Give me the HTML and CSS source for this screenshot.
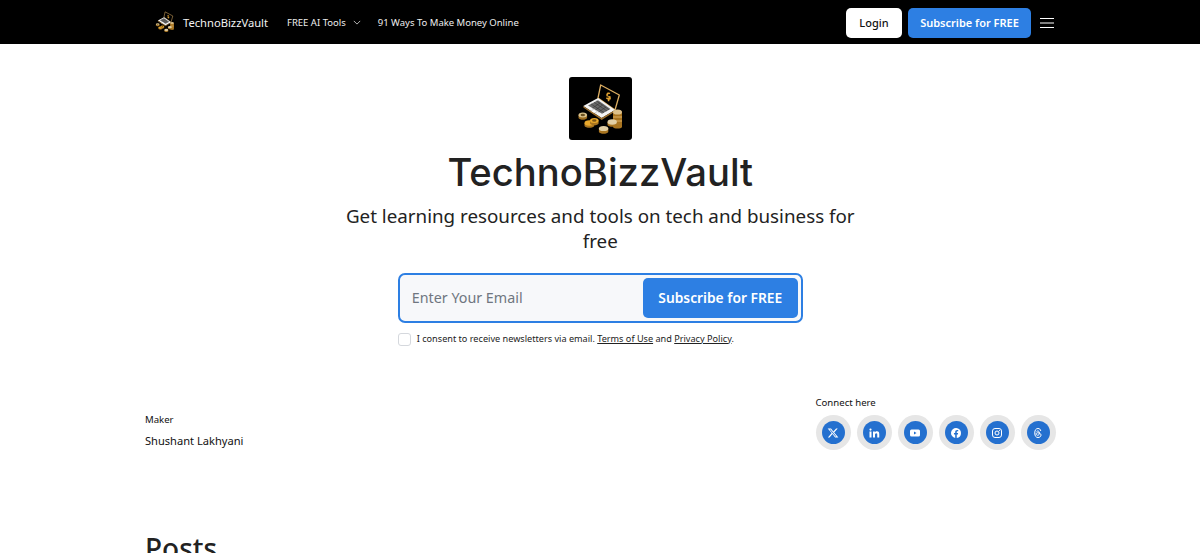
FILE: index.html
```html
<!DOCTYPE html>
<html lang="en">
<head>
<meta charset="utf-8">
<title>TechnoBizzVault</title>
<link rel="stylesheet" href="styles.css">
</head>
<body>
<svg class="defs" width="0" height="0" aria-hidden="true">
  <symbol id="laptop" viewBox="0 0 63 63">
    <path d="M31.700 8 50.300 18 46 33 29 21z" fill="#000" stroke="#dcae62" stroke-width="1.300" stroke-linejoin="round"/>
    <path d="M38.500 15.500h2l.8 1.500-2.300.3-.2 1.500 2.800.5.300 3-1.500.5v1.500h-1.600v-1.700l-1.700-.8.200-1.300 2.300.3-.1-1-2.100-.6-.1-2.200z" fill="#e0a030"/>
    <path d="M14.300 29 29 21 46 33 32.700 41z" fill="#f4f4f4"/>
    <path d="M19 28.500 29 23.300 41.500 32 33 36.800z" fill="#6a6a6a"/>
    <path d="M22 26.900 35 35.600M25 25.300 38 34M27.500 24 40 32.800M23.500 31 31 26M26.500 33 33.500 28M29.500 35 37 30" stroke="#2c2c2c" stroke-width=".5"/>
    <path d="M21.500 34.200l3.500-1.900 3.300 2.200-3.600 2z" fill="#fff" stroke="#999" stroke-width=".4"/>
    <path d="M14.300 29v1.600L32.700 43 46 34.600V33L32.700 41z" fill="#9c7030"/>
    <path d="M9.500 38v3c1 2.400 7.600 2.400 8.600 0v-3z" fill="#9c6c20"/>
    <ellipse cx="13.800" cy="38" rx="4.300" ry="2.500" fill="#d8c08a"/>
    <ellipse cx="13.800" cy="38" rx="2.200" ry="1.200" fill="#6a5020"/>
    <path d="M15.500 46v3c1 2.400 8.800 2.400 9.800 0v-3z" fill="#a87420"/>
    <ellipse cx="20.400" cy="46" rx="4.900" ry="2.700" fill="#e8a82c"/>
    <path d="M21 43.500v3c1 2.400 7.600 2.400 8.600 0v-3z" fill="#a87420"/>
    <ellipse cx="25.300" cy="43.500" rx="4.300" ry="2.500" fill="#e8a82c"/>
    <ellipse cx="25.300" cy="43.500" rx="2.200" ry="1.200" fill="#7a5414"/>
    <path d="M29.900 51.500v3.500c1 2.400 8.400 2.400 9.400 0v-3.500z" fill="#a87420"/>
    <ellipse cx="34.600" cy="51.500" rx="4.700" ry="2.600" fill="#e2cfa4"/>
    <path d="M44 35v15c.8 2 8.200 2 9 0V35z" fill="#a87420"/>
    <path d="M44 40h9M44 44h9" stroke="#dcae62" stroke-width="1"/>
    <ellipse cx="48.500" cy="35" rx="4.500" ry="2.600" fill="#dcc08a"/>
    <path d="M38.500 45v3c1 2.400 8.400 2.400 9.400 0v-3z" fill="#a87420"/>
    <ellipse cx="43.200" cy="45" rx="4.700" ry="2.700" fill="#e2cfa4"/>
  </symbol>
</svg>
<header class="nav">
  <div class="nav-inner">
    <a class="brand" href="#"><svg class="brand-icon" viewBox="8 6 47 53"><use href="#laptop" width="63" height="63"/></svg><span>TechnoBizzVault</span></a>
    <a class="nav-link" href="#">FREE AI Tools
      <svg class="chev" viewBox="0 0 10 6"><path d="M1 1l4 4 4-4" fill="none" stroke="#ddd" stroke-width="1"/></svg>
    </a>
    <a class="nav-link" href="#">91 Ways To Make Money Online</a>
    <div class="nav-actions">
      <a class="btn btn-white" href="#">Login</a>
      <a class="btn btn-blue" href="#">Subscribe for FREE</a>
      <svg class="burger" viewBox="0 0 14 10"><path d="M0 .5h14M0 5h14M0 9.500h14" stroke="#fff" stroke-width="1"/></svg>
    </div>
  </div>
</header>
<main>
  <section class="hero">
    <div class="logo"><svg class="logo-icon"><use href="#laptop"/></svg></div>
    <h1>TechnoBizzVault</h1>
    <p class="tagline">Get learning resources and tools on tech and business for free</p>
    <form class="subscribe">
      <span class="placeholder">Enter Your Email</span>
      <button class="sub-btn" type="button">Subscribe for FREE</button>
    </form>
    <div class="consent">
      <span class="check"></span>
      <span class="consent-text">I consent to receive newsletters via email. <a href="#">Terms of Use</a> and <a href="#">Privacy Policy</a>.</span>
    </div>
  </section>
  <section class="meta">
    <div class="maker">
      <div class="label">Maker</div>
      <div class="name">Shushant Lakhyani</div>
    </div>
    <div class="connect">
      <div class="label">Connect here</div>
      <div class="socials">
        <span class="soc"><span class="dot"><svg viewBox="0 0 24 24"><path fill="#fff" d="M18.200 3h3.300l-7.200 8.200L22.800 21h-6.600l-5.200-6.800L5 21H1.700l7.700-8.800L1.300 3h6.800l4.700 6.200zm-1.200 16h1.800L7.100 4.900H5.100z"/></svg></span></span>
        <span class="soc"><span class="dot"><svg viewBox="0 0 24 24"><path fill="#fff" d="M3 9h4v12H3zM5 3a2.200 2.200 0 1 1 0 4.400A2.200 2.200 0 0 1 5 3zM10 9h3.800v1.700c.6-1 2-2 4-2 4 0 4.700 2.600 4.700 6V21h-4v-5.500c0-1.400 0-3.100-1.900-3.100s-2.600 1.500-2.600 3V21h-4z"/></svg></span></span>
        <span class="soc"><span class="dot"><svg viewBox="0 0 24 24"><path fill="#fff" fill-rule="evenodd" d="M5 5h14a3 3 0 0 1 3 3v8a3 3 0 0 1-3 3H5a3 3 0 0 1-3-3V8a3 3 0 0 1 3-3zm5 4v6l5-3z"/></svg></span></span>
        <span class="soc"><span class="dot"><svg viewBox="0 0 24 24"><path fill="#fff" d="M22 12a10 10 0 1 0-11.600 9.900v-7H7.900V12h2.500V9.800c0-2.500 1.500-3.900 3.800-3.900 1.100 0 2.200.2 2.200.2v2.500h-1.300c-1.200 0-1.600.8-1.600 1.600V12h2.800l-.5 2.900h-2.300v7A10 10 0 0 0 22 12z"/></svg></span></span>
        <span class="soc"><span class="dot"><svg viewBox="0 0 24 24"><rect x="3" y="3" width="18" height="18" rx="5" fill="none" stroke="#fff" stroke-width="2"/><circle cx="12" cy="12" r="4" fill="none" stroke="#fff" stroke-width="2"/><circle cx="17" cy="7" r="1.200" fill="#fff"/></svg></span></span>
        <span class="soc"><span class="dot"><svg viewBox="0 0 24 24"><path fill="none" stroke="#fff" stroke-width="2" d="M17.500 8C17 4.500 15 3 12 3 8 3 5.500 6 5.500 12s2.500 9 6.500 9c3.500 0 6-2 6-4.800 0-3-3-4.700-6.500-4.700-2 0-3.200 1-3.200 2.500s1.300 2.500 3 2.500c2.200 0 3.400-1.500 3.400-4.500 0-2.500-1.200-4-3.200-4-1.200 0-2 .5-2.500 1.300"/></svg></span></span>
      </div>
    </div>
  </section>
  <h2 class="posts">Posts</h2>
</main>
</body>
</html>
```
FILE: styles.css
```css
* { box-sizing: border-box; }
html, body { margin: 0; height: 553px; overflow: hidden; }
body { font-family: "Noto Sans", "Open Sans", sans-serif; color: #111; background: #fff; }
a { color: inherit; }
.defs { position: absolute; }

.nav { background: #000; height: 44px; color: #fff; }
.nav-inner { width: 899px; margin-left: 155px; height: 44px; display: flex; align-items: center; }
.nav-inner a { text-decoration: none; }
.brand { display: flex; align-items: center; gap: 8px; font-size: 11.2px; color: #f2f2f2; margin-right: 19px; }
.brand-icon { width: 20px; height: 22px; }
.nav-link { font-size: 9.5px; color: #eee; margin-right: 17px; display: flex; align-items: center; gap: 7px; }
.chev { width: 8px; height: 5px; }
.nav-actions { margin-left: auto; display: flex; align-items: center; padding-top: 2px; }
.btn { height: 30px; border-radius: 5px; font-size: 11px; display: flex; align-items: center; justify-content: center; font-weight: 500; padding-bottom: 2px; }
.btn-white { width: 56px; background: #fff; color: #111; margin-right: 6px; }
.btn-blue { width: 123px; background: #2d7fe3; color: #fff; margin-right: 9px; font-weight: 600; }
.burger { width: 14px; height: 10px; }

main { width: 910.5px; margin-left: 145px; }
.hero { display: flex; flex-direction: column; align-items: center; padding-top: 33px; }
.logo { width: 63px; height: 63px; background: #000; border-radius: 3px; display: flex; align-items: center; justify-content: center; }
.logo-icon { width: 63px; height: 63px; }
h1 { font-family: "Inter", sans-serif; font-weight: 500; font-size: 38.2px; line-height: 50px; margin: 7px 0 0; color: #222; }
.tagline { width: 530px; text-align: center; font-size: 18.8px; line-height: 25px; margin: 7px 0 0; color: #222; }
.subscribe { margin-top: 19px; width: 405px; height: 50px; border: 2px solid #2d7fe3; border-radius: 7px; background: #f7f8fa; display: flex; align-items: center; justify-content: space-between; padding: 0 3px 0 12px; }
.placeholder { font-size: 14.3px; color: #6f7680; padding-bottom: 2px; }
.sub-btn { width: 155px; height: 40px; border: 0; border-radius: 5px; background: #2d7fe3; color: #fff; font: 600 13.8px "Noto Sans", sans-serif; padding: 0 0 2px; }
.consent { width: 405px; margin-top: 9px; display: flex; align-items: center; gap: 6px; font-size: 9.15px; color: #222; height: 14px; }
.consent-text { padding-bottom: 2px; }
.check { width: 13px; height: 13px; border: 1px solid #d5d8dd; border-radius: 3px; background: #fff; }

.meta { display: flex; justify-content: space-between; margin-top: 49px; }
.maker { padding-top: 18px; }
.connect { padding-top: 1px; }
.label { font-size: 9.6px; line-height: 14px; color: #111; }
.name { font-size: 11.1px; line-height: 16px; margin-top: 6px; color: #111; }
.socials { display: flex; gap: 6px; margin-top: 5px; }
.soc { width: 35px; height: 35px; border-radius: 50%; background: #e6e6e6; display: flex; align-items: center; justify-content: center; }
.dot { width: 23px; height: 23px; border-radius: 50%; background: #2470cf; display: flex; align-items: center; justify-content: center; }
.dot svg { width: 12px; height: 12px; }
.posts { font-weight: 500; font-size: 28px; line-height: 38px; margin: 79px 0 0; color: #222; }
```
